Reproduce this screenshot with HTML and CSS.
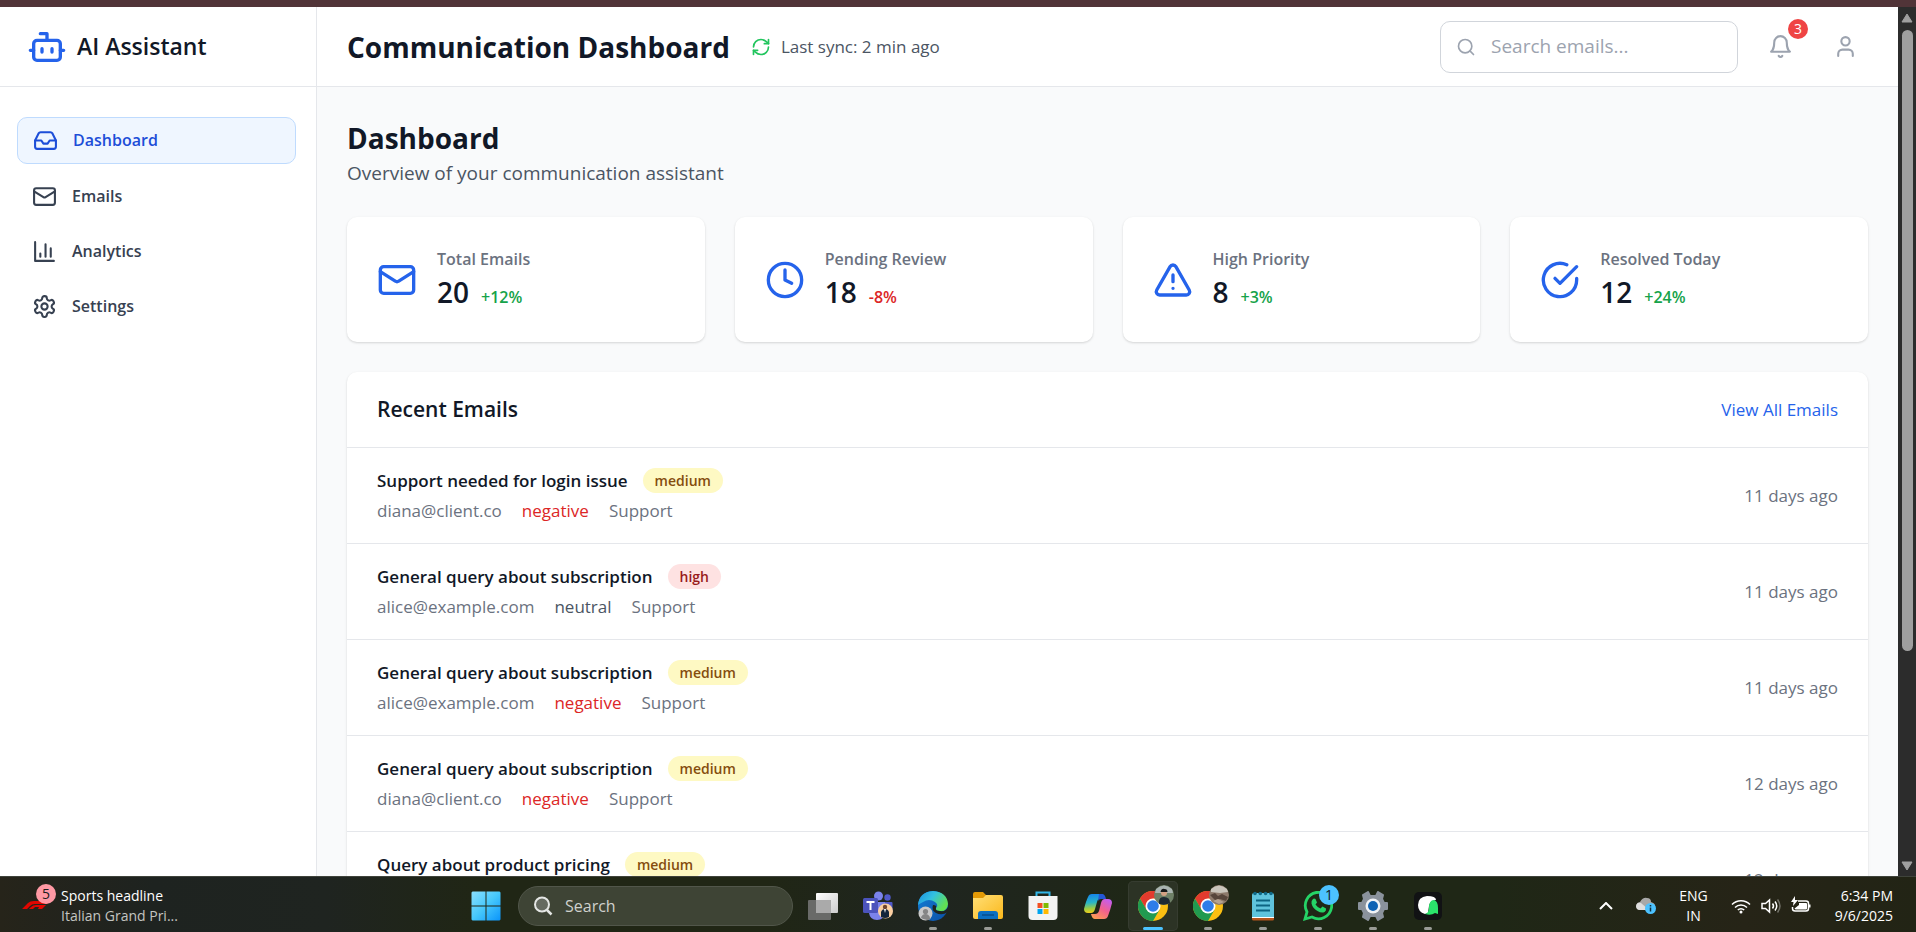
FILE: index.html
```html
<!DOCTYPE html>
<html lang="en">
<head>
<meta charset="utf-8">
<title>Communication Dashboard</title>
<link rel="stylesheet" href="styles.css">
</head>
<body>
<div class="window-edge"></div>

<div class="viewport">
  <div class="app">
    <aside class="sidebar">
      <div class="brand">
        <svg class="icon icon-lg" viewBox="0 0 24 24"><path d="M12 8V4H8"/><rect width="16" height="12" x="4" y="8" rx="2"/><path d="M2 14h2M20 14h2M15 13v2M9 13v2"/></svg>
        <span class="brand-name">AI Assistant</span>
      </div>
      <nav class="nav">
        <a class="nav-item active" href="#dashboard">
          <svg class="icon icon-md" viewBox="0 0 24 24"><path d="M22 12h-6l-2 3h-4l-2-3H2"/><path d="M5.45 5.11 2 12v6a2 2 0 0 0 2 2h16a2 2 0 0 0 2-2v-6l-3.45-6.89A2 2 0 0 0 16.76 4H7.24a2 2 0 0 0-1.79 1.11z"/></svg>
          Dashboard
        </a>
        <a class="nav-item" href="#emails">
          <svg class="icon icon-md" viewBox="0 0 24 24"><rect width="20" height="16" x="2" y="4" rx="2"/><path d="m22 7-8.97 5.7a1.94 1.94 0 0 1-2.06 0L2 7"/></svg>
          Emails
        </a>
        <a class="nav-item" href="#analytics">
          <svg class="icon icon-md" viewBox="0 0 24 24"><path d="M3 3v18h18M18 17V9M13 17V5M8 17v-3"/></svg>
          Analytics
        </a>
        <a class="nav-item" href="#settings">
          <svg class="icon icon-md" viewBox="0 0 24 24"><path d="M12.22 2h-.44a2 2 0 0 0-2 2v.18a2 2 0 0 1-1 1.73l-.43.25a2 2 0 0 1-2 0l-.15-.08a2 2 0 0 0-2.73.73l-.22.38a2 2 0 0 0 .73 2.73l.15.1a2 2 0 0 1 1 1.72v.51a2 2 0 0 1-1 1.74l-.15.09a2 2 0 0 0-.73 2.73l.22.38a2 2 0 0 0 2.73.73l.15-.08a2 2 0 0 1 2 0l.43.25a2 2 0 0 1 1 1.73V20a2 2 0 0 0 2 2h.44a2 2 0 0 0 2-2v-.18a2 2 0 0 1 1-1.73l.43-.25a2 2 0 0 1 2 0l.15.08a2 2 0 0 0 2.73-.73l.22-.39a2 2 0 0 0-.73-2.73l-.15-.08a2 2 0 0 1-1-1.74v-.5a2 2 0 0 1 1-1.74l.15-.09a2 2 0 0 0 .73-2.73l-.22-.38a2 2 0 0 0-2.73-.73l-.15.08a2 2 0 0 1-2 0l-.43-.25a2 2 0 0 1-1-1.73V4a2 2 0 0 0-2-2z"/><circle cx="12" cy="12" r="3"/></svg>
          Settings
        </a>
      </nav>
    </aside>

    <div class="page">
      <header class="topbar">
        <h1 class="title">Communication Dashboard</h1>
        <div class="sync">
          <svg class="icon icon-sm sync-icon" viewBox="0 0 24 24"><path d="M3 12a9 9 0 0 1 9-9 9.75 9.75 0 0 1 6.74 2.74L21 8"/><path d="M21 3v5h-5"/><path d="M21 12a9 9 0 0 1-9 9 9.75 9.75 0 0 1-6.74-2.74L3 16"/><path d="M8 16H3v5"/></svg>
          <span>Last sync: 2 min ago</span>
        </div>
        <div class="actions">
          <label class="search">
            <svg class="icon icon-sm" viewBox="0 0 24 24"><circle cx="11" cy="11" r="8"/><path d="m21 21-4.3-4.3"/></svg>
            <input type="search" class="search-input" placeholder="Search emails..." aria-label="Search emails">
          </label>
          <button class="icon-button" type="button" aria-label="Notifications">
            <svg class="icon icon-md" viewBox="0 0 24 24"><path d="M6 8a6 6 0 0 1 12 0c0 7 3 9 3 9H3s3-2 3-9"/><path d="M10.3 21a1.94 1.94 0 0 0 3.4 0"/></svg>
            <span class="count">3</span>
          </button>
          <button class="icon-button" type="button" aria-label="Account">
            <svg class="icon icon-md" viewBox="0 0 24 24"><path d="M19 21v-2a4 4 0 0 0-4-4H9a4 4 0 0 0-4 4v2"/><circle cx="12" cy="7" r="4"/></svg>
          </button>
        </div>
      </header>

      <main class="content">
        <h2 class="title">Dashboard</h2>
        <p class="subtitle">Overview of your communication assistant</p>

        <section class="stats">
          <article class="stat">
            <svg class="icon icon-lg" viewBox="0 0 24 24"><rect width="20" height="16" x="2" y="4" rx="2"/><path d="m22 7-8.97 5.7a1.94 1.94 0 0 1-2.06 0L2 7"/></svg>
            <div>
              <p class="stat-label">Total Emails</p>
              <p class="stat-value">20 <span class="delta up">+12%</span></p>
            </div>
          </article>
          <article class="stat">
            <svg class="icon icon-lg" viewBox="0 0 24 24"><circle cx="12" cy="12" r="10"/><path d="M12 6v6l4 2"/></svg>
            <div>
              <p class="stat-label">Pending Review</p>
              <p class="stat-value">18 <span class="delta down">-8%</span></p>
            </div>
          </article>
          <article class="stat">
            <svg class="icon icon-lg" viewBox="0 0 24 24"><path d="m21.73 18-8-14a2 2 0 0 0-3.48 0l-8 14A2 2 0 0 0 4 21h16a2 2 0 0 0 1.73-3Z"/><path d="M12 9v4M12 17h.01"/></svg>
            <div>
              <p class="stat-label">High Priority</p>
              <p class="stat-value">8 <span class="delta up">+3%</span></p>
            </div>
          </article>
          <article class="stat">
            <svg class="icon icon-lg" viewBox="0 0 24 24"><path d="M22 11.08V12a10 10 0 1 1-5.93-9.14"/><path d="m9 11 3 3L22 4"/></svg>
            <div>
              <p class="stat-label">Resolved Today</p>
              <p class="stat-value">12 <span class="delta up">+24%</span></p>
            </div>
          </article>
        </section>

        <section class="panel">
          <div class="panel-head">
            <h3 class="panel-title">Recent Emails</h3>
            <a class="panel-link" href="#emails">View All Emails</a>
          </div>
          <ul class="emails">
            <li class="email">
              <div>
                <div class="email-top"><span class="subject">Support needed for login issue</span><span class="tag medium">medium</span></div>
                <div class="email-meta"><span>diana@client.co</span><span class="negative">negative</span><span>Support</span></div>
              </div>
              <time class="when">11 days ago</time>
            </li>
            <li class="email">
              <div>
                <div class="email-top"><span class="subject">General query about subscription</span><span class="tag high">high</span></div>
                <div class="email-meta"><span>alice@example.com</span><span class="neutral">neutral</span><span>Support</span></div>
              </div>
              <time class="when">11 days ago</time>
            </li>
            <li class="email">
              <div>
                <div class="email-top"><span class="subject">General query about subscription</span><span class="tag medium">medium</span></div>
                <div class="email-meta"><span>alice@example.com</span><span class="negative">negative</span><span>Support</span></div>
              </div>
              <time class="when">11 days ago</time>
            </li>
            <li class="email">
              <div>
                <div class="email-top"><span class="subject">General query about subscription</span><span class="tag medium">medium</span></div>
                <div class="email-meta"><span>diana@client.co</span><span class="negative">negative</span><span>Support</span></div>
              </div>
              <time class="when">12 days ago</time>
            </li>
            <li class="email">
              <div>
                <div class="email-top"><span class="subject">Query about product pricing</span><span class="tag medium">medium</span></div>
                <div class="email-meta"></div>
              </div>
              <time class="when">12 days ago</time>
            </li>
          </ul>
        </section>
      </main>
    </div>
  </div>

  <div class="scrollbar">
    <svg class="scroll-arrow" viewBox="0 0 12 10"><path d="M6 1 11 9H1z"/></svg>
    <div class="scroll-track"><div class="scroll-thumb"></div></div>
    <svg class="scroll-arrow" viewBox="0 0 12 10"><path d="M6 9 11 1H1z"/></svg>
  </div>
</div>

<footer class="taskbar">
  <button class="widget" type="button">
    <span class="widget-art">
      <svg class="f1" viewBox="0 0 28 8"><path d="M0 8 6 2Q8 0 12 0H28L25 3H13Q10 3 8 5L5 8z"/><path d="M7 8 9 6Q11 4 14 4H24L20 8H16L17 6H13L11 8z"/></svg>
      <span class="widget-count">5</span>
    </span>
    <span class="widget-text"><span>Sports headline</span><span class="dim">Italian Grand Pri...</span></span>
  </button>

  <div class="dock">
    <button class="task" type="button" aria-label="Start">
      <svg class="task-icon" viewBox="0 0 30 30">
        <defs><linearGradient id="win" x1="0" y1="0" x2="1" y2="1"><stop offset="0" stop-color="#8be0ff"/><stop offset=".5" stop-color="#46c8fc"/><stop offset="1" stop-color="#0a94fb"/></linearGradient></defs>
        <path fill="url(#win)" d="M1.500.5h13v14h-14v-13zM15.500.5h13l1 1v13h-14zM.5 15.500h14v14h-13l-1-1zM15.500 15.500h14v13l-1 1h-13z"/>
      </svg>
    </button>
    <label class="task-search">
      <svg class="task-search-icon" viewBox="0 0 20 20"><circle cx="9" cy="8.500" r="7" fill="#656a60" stroke="#e4e6e4" stroke-width="2"/><path d="m14 14 4.500 4.500" stroke="#e4e6e4" stroke-width="2.500"/></svg>
      <input class="task-search-input" type="text" placeholder="Search" aria-label="Search Windows">
    </label>
    <button class="task" type="button" aria-label="Task view">
      <svg class="task-icon" viewBox="0 0 30 30"><defs><linearGradient id="tv" x1="0" y1="0" x2="1" y2="1"><stop offset="0" stop-color="#fff"/><stop offset="1" stop-color="#ccc"/></linearGradient></defs><rect x="8" y="2" width="22" height="20" rx="1" fill="url(#tv)"/><rect x="0" y="9" width="23" height="20" rx="1" fill="#777" opacity=".85"/><path fill="#aaa" d="M8 9h15v13H8z"/></svg>
    </button>
    <button class="task" type="button" aria-label="Teams">
      <svg class="task-icon" viewBox="0 0 30 30"><circle cx="15.500" cy="5" r="4.500" fill="#7b83eb"/><circle cx="24.500" cy="6.500" r="3.200" fill="#5059c9"/><path fill="#5059c9" d="M19 11h9.500q1 0 1 1v9q-1 6-8 6z"/><path fill="#7b83eb" d="M8 11h14v11q-1 7-8 7t-8-7z"/><rect y="7" width="15" height="15" rx="1.500" fill="#4b53bc"/><path d="M3.500 11h8M7.500 11v8" stroke="#fff" stroke-width="2"/><circle cx="22.500" cy="20" r="7.500" fill="#fbcfa0"/><circle cx="22" cy="16" r="2.200" fill="#70442e"/><path fill="#14243a" d="M18 26v-5q1-3 4-3t4 3v5q-4 2-8 0z"/><path fill="#fff" d="m21 18 1 4 1-4z"/></svg>
    </button>
    <button class="task running" type="button" aria-label="Edge">
      <svg class="task-icon" viewBox="0 0 30 30"><defs><linearGradient id="eg" x1="0" y1="0" x2="1" y2=".5"><stop offset="0" stop-color="#1b8ee0"/><stop offset=".5" stop-color="#33c0e0"/><stop offset="1" stop-color="#62e052"/></linearGradient><linearGradient id="eb" x1="0" y1="0" x2="1" y2="1"><stop offset="0" stop-color="#1380d8"/><stop offset="1" stop-color="#0b4fa5"/></linearGradient></defs><circle cx="15" cy="15" r="15" fill="url(#eb)"/><path fill="url(#eg)" d="M0 14Q1 1 15 0q14 1 15 13-1 8-8 7-5 0-4-3 3-3-1-6-6-4-12 0-4 2-5 3z"/><path fill="#1f2520" d="M15 14q-2 5 3 8 6 3 12-1v-5q-2 5-8 4-5 0-4-3 1-3-3-3z"/><circle cx="7.500" cy="22.500" r="7" fill="#c9c9c9"/><circle cx="7.500" cy="20.500" r="2.600" fill="#858585"/><path fill="#858585" d="M3 27q1-4 4.500-4t4.500 4-9 0z"/></svg>
    </button>
    <button class="task running" type="button" aria-label="File Explorer">
      <svg class="task-icon" viewBox="0 0 30 30"><path fill="#e39a06" d="M0 3q0-2 2-2h8l3 3h7v6H0z"/><defs><linearGradient id="fe" x1="0" y1="0" x2="1" y2="1"><stop offset="0" stop-color="#ffdf77"/><stop offset="1" stop-color="#fbb81b"/></linearGradient></defs><path fill="url(#fe)" d="M0 7h10l3-3h15q2 0 2 2v20q0 2-2 2H2q-2 0-2-2z"/><path fill="#0b6fc2" d="M5 28v-5q0-3 3-3h14q3 0 3 3v5z"/><path stroke="#084e8d" stroke-width="1.500" d="M9 24h12"/></svg>
    </button>
    <button class="task" type="button" aria-label="Microsoft Store">
      <svg class="task-icon" viewBox="0 0 30 30"><path d="M8.500 6V1.500h13V6" fill="none" stroke="#32b6e8" stroke-width="2"/><path fill="#f3f3f3" d="M.5 5h29v20q0 4-4 4h-21q-4 0-4-4z"/><path fill="#f25022" d="M9.500 12h5v5h-5z"/><path fill="#7fba00" d="M15.500 12h5v5h-5z"/><path fill="#00a4ef" d="M9.500 18h5v5h-5z"/><path fill="#ffb900" d="M15.500 18h5v5h-5z"/></svg>
    </button>
    <button class="task" type="button" aria-label="Copilot">
      <svg class="task-icon" viewBox="0 0 30 30"><defs><linearGradient id="ca" x1=".3" y1="0" x2=".4" y2="1"><stop offset="0" stop-color="#1583ee"/><stop offset=".45" stop-color="#29b6c6"/><stop offset=".75" stop-color="#9ccd45"/><stop offset="1" stop-color="#f5cc17"/></linearGradient><linearGradient id="cb" x1=".8" y1="0" x2=".2" y2="1"><stop offset="0" stop-color="#c35df0"/><stop offset=".5" stop-color="#f2618c"/><stop offset="1" stop-color="#ff9d52"/></linearGradient></defs><path fill="url(#ca)" d="M9 3h9q3 0 4 4h-4q-3 0-4 4l-2 7q-1 4-4 4H5q-4 0-4-4Q3 10 5 6q1-3 4-3z"/><path fill="#2456d6" d="M16 3h3q3 0 4 5h-5q-2 0-3 2z"/><path fill="url(#cb)" d="M25 8q4 0 4 4-2 8-4 13-1 3-4 3h-9q-3 0-4-5h4q3 0 4-3l2-8q1-4 4-4z"/></svg>
    </button>
    <button class="task running current" type="button" aria-label="Chrome">
      <svg class="task-icon" viewBox="0 0 30 30"><circle cx="15" cy="15" r="15" fill="#fbbf12"/><path fill="#e33b2e" d="M2 7.500A15 15 0 0 1 28 7.500H15L8.500 19z"/><path fill="#219a50" d="M2 7.500A15 15 0 0 0 15 30l6.500-11.200H8.500z"/><circle cx="15" cy="15" r="7.500" fill="#fff"/><circle cx="15" cy="15" r="5.800" fill="#2f7de9"/></svg>
      <svg class="avatar" viewBox="0 0 20 20"><circle cx="10" cy="10" r="10" fill="#6f8168"/><path fill="#a9b3b0" d="M2 4q8-7 16 0l1 4H1z"/><path fill="#1e2a33" d="M5 19q-1-7 5-7t6 6q-5 3-11 1z"/><circle cx="10" cy="8" r="3" fill="#d3a184"/><path fill="#16191a" d="M6.500 7q1-4 4-3 3 0 3 3z"/></svg>
    </button>
    <button class="task running" type="button" aria-label="Chrome, second profile">
      <svg class="task-icon" viewBox="0 0 30 30"><circle cx="15" cy="15" r="15" fill="#fbbf12"/><path fill="#e33b2e" d="M2 7.500A15 15 0 0 1 28 7.500H15L8.500 19z"/><path fill="#219a50" d="M2 7.500A15 15 0 0 0 15 30l6.500-11.200H8.500z"/><circle cx="15" cy="15" r="7.500" fill="#fff"/><circle cx="15" cy="15" r="5.800" fill="#2f7de9"/></svg>
      <svg class="avatar" viewBox="0 0 20 20"><circle cx="10" cy="10" r="10" fill="#8d7a6b"/><path fill="#c9c5bb" d="M2 4q8-7 16 0l1 3-8 1-9-1z"/><path fill="#57463b" d="m1 10 5-2 3 3 4-2 6 3-2 4-6-2-5 1z"/><path fill="#b5a392" d="m4 16 5-2 6 3-5 2z"/></svg>
    </button>
    <button class="task running" type="button" aria-label="Notepad">
      <svg class="task-icon" viewBox="0 0 30 30"><path fill="#fff" d="M4 24h22v3H4z"/><path fill="#b4541c" d="M4 27h22v1q0 1.500-1.500 1.500h-19Q4 29.500 4 28z"/><path fill="#5fc3dc" d="M4 4q0-2 2-2h18q2 0 2 2v22H4z"/><path stroke="#0d6482" stroke-width="2" d="M8 9.500h14M8 14.500h14M8 19.500h14"/><g fill="#116a88"><circle cx="7" cy="2.500" r="1.800"/><circle cx="12.300" cy="2.500" r="1.800"/><circle cx="17.600" cy="2.500" r="1.800"/><circle cx="23" cy="2.500" r="1.800"/></g></svg>
    </button>
    <button class="task running" type="button" aria-label="WhatsApp">
      <svg class="task-icon" viewBox="0 0 30 30"><path fill="#1f2716" stroke="#25d366" stroke-width="2.800" d="m2 28 2-7A13.200 13.200 0 1 1 9 26z"/><path fill="#25d366" d="M10 8q1-1 2.500 0l1.500 3.500-1.500 2q2 3 5 4l2-2 3.500 2q.5 2-1.500 3.500-3 1.500-7-1-5-3-6-7.500-.5-3 1.500-4.500z"/></svg>
      <span class="task-count">1</span>
    </button>
    <button class="task running" type="button" aria-label="Settings">
      <svg class="task-icon" viewBox="0 0 30 30"><path fill="#8a929c" stroke="#8a929c" stroke-width="2" stroke-linejoin="round" d="m10 1 2 4h6l2-4 5 3-1 4 2 4h3v6h-3l-2 4 1 4-5 3-2-4h-6l-2 4-5-3 1-4-2-4H1v-6h3l2-4-1-4z"/><circle cx="15" cy="15" r="7.500" fill="#f0f3f6"/><circle cx="15" cy="15" r="5" fill="#0f63b4"/></svg>
    </button>
    <button class="task running" type="button" aria-label="Chat">
      <svg class="task-icon" viewBox="0 0 30 30"><rect x="1" y="1" width="28" height="28" rx="5" fill="#111214"/><path fill="#fff" d="M14 5q9 0 9 4-6 0-7 6l-1 7-3 1Q5 21 5 14q0-8 9-9z"/><path fill="#2be36b" d="M12 23q4-1 4-6 0-8 5-8 4 1 4 8v6l-3-1q-4 3-10 1z"/></svg>
    </button>
  </div>

  <div class="tray">
    <svg class="tray-chevron" viewBox="0 0 14 8"><path d="m1 7 6-6 6 6"/></svg>
    <svg class="tray-cloud" viewBox="0 0 20 18"><path fill="#a8a8a8" d="M5 13a4 4 0 0 1-1-8Q7 0 11 1q4 0 4 4 4 1 4 4v4z"/><path fill="#dedede" d="M4 13q-4 0-4-4 1-4 5-3l8 7z"/><circle cx="14.500" cy="11.500" r="5.500" fill="#4cc2ff"/><path stroke="#103040" stroke-width="1.500" d="M14.500 8v1.500M14.500 10.500v4"/></svg>
    <span class="lang"><span>ENG</span><span>IN</span></span>
    <span class="status">
      <svg class="tray-icon" viewBox="0 0 20 20"><path d="M1 8.500a12.500 12.500 0 0 1 18 0M4 11.500a8.500 8.500 0 0 1 12 0M6.800 14a4.500 4.500 0 0 1 6.400 0"/><circle cx="10" cy="16" r="1.500" class="solid"/></svg>
      <svg class="tray-icon" viewBox="0 0 20 20"><path d="M1 7.500v5h3.500L8.500 16V4L4.500 7.500z"/><path d="M11.500 7.500q2 2.500 0 5M14 5.500q3.500 4.500 0 9"/><path d="M16.500 3.500q5 6.500 0 13" opacity=".35"/></svg>
      <svg class="tray-icon" viewBox="0 0 20 20"><path d="M7 5h8q2.500 0 2.500 2.500v5q0 2.500-2.500 2.500H4q-2.500 0-2.500-2.500V11"/><path class="solid" d="M8 7h7q1 0 1 1v4.500q0 1-1 1H5q-1 0-1.500-1L8 9zM18 8.500h1.500v3H18zM4 0 0 6h2.500l-.5 4 5-6H4z"/></svg>
    </span>
    <span class="clock"><span>6:34 PM</span><span>9/6/2025</span></span>
  </div>
</footer>
</body>
</html>
```

FILE: styles.css
```css
* { box-sizing: border-box; }

body {
  display: flex;
  flex-direction: column;
  height: 100vh;
  margin: 0;
  overflow: hidden;
  background: #fff;
  color: #111827;
  font-family: "Open Sans", "Noto Sans", sans-serif;
  font-size: 17px;
  line-height: 25px;
}

h1, h2, h3, p, ul { margin: 0; padding: 0; }
ul { list-style: none; }
a { text-decoration: none; }
button { padding: 0; border: 0; background: none; color: inherit; font: inherit; }
input { min-width: 0; padding: 0; border: 0; outline: 0; background: none; color: inherit; font: inherit; }
svg { display: block; flex: none; }

.window-edge { flex: none; height: 7px; background: #513438; }
.viewport { display: flex; flex: 1; min-height: 0; }
.app { display: flex; flex: 1; min-width: 0; overflow: hidden; background: #f9fafb; }

.icon { fill: none; stroke: currentColor; stroke-width: 2; stroke-linecap: round; stroke-linejoin: round; }
.icon-sm { width: 20px; height: 20px; }
.icon-md { width: 25px; height: 25px; }
.icon-lg { width: 40px; height: 40px; color: #2563eb; }

/* Sidebar */
.sidebar { flex: none; width: 317px; border-right: 1px solid #e5e7eb; background: #fff; }
.brand { display: flex; align-items: center; gap: 10px; height: 80px; padding-left: 27px; border-bottom: 1px solid #e5e7eb; }
.brand-name { font-size: 23px; font-weight: 600; }
.nav { display: flex; flex-direction: column; gap: 10px; padding: 30px 20px 0 17px; }
.nav-item { display: flex; align-items: center; gap: 15px; padding: 10px 15px; border-radius: 10px; color: #374151; font-size: 16px; font-weight: 600; }
.nav-item.active { border: 1px solid #bfdbfe; background: #eff6ff; color: #1d4ed8; }

/* Header */
.page { flex: 1; min-width: 0; }
.topbar { display: flex; align-items: center; height: 80px; padding: 0 30px; border-bottom: 1px solid #e5e7eb; background: #fff; }
.title { font-size: 28px; font-weight: 700; line-height: 42px; }
.sync { display: flex; align-items: center; gap: 10px; margin-left: 21px; color: #4b5563; }
.sync-icon { color: #22c55e; }
.actions { display: flex; align-items: center; gap: 20px; margin-left: auto; color: #9ca3af; }
.search { display: flex; align-items: center; gap: 15px; width: 298px; height: 52px; padding: 0 15px; border: 1px solid #d1d5db; border-radius: 10px; }
.search-input { flex: 1; font-size: 19px; }
.search-input::placeholder { color: #9ca3af; opacity: 1; }
.icon-button { position: relative; padding: 10px; }
.count { position: absolute; top: -5px; right: -5px; width: 20px; height: 20px; border-radius: 50%; background: #ef4444; color: #fff; font-size: 14px; line-height: 20px; text-align: center; }

/* Dashboard */
.content { padding: 30px; }
.subtitle { color: #4b5563; font-size: 19px; line-height: 28px; }
.stats { display: grid; grid-template-columns: repeat(4, 1fr); gap: 30px; margin: 30px 0; }
.stat, .panel { border-radius: 10px; background: #fff; box-shadow: 0 1px 3px rgba(0, 0, 0, .1), 0 1px 2px rgba(0, 0, 0, .06); }
.stat { display: flex; align-items: center; gap: 20px; padding: 30px; }
.stat-label { color: #6b7280; font-size: 16px; font-weight: 600; }
.stat-value { display: flex; align-items: baseline; gap: 12px; font-size: 28px; font-weight: 600; line-height: 40px; }
.delta { font-size: 16px; line-height: 20px; }
.up { color: #16a34a; }
.down { color: #dc2626; }

.panel-head { display: flex; align-items: center; justify-content: space-between; height: 76px; padding: 0 30px; border-bottom: 1px solid #e5e7eb; }
.panel-title { font-size: 21px; font-weight: 600; }
.panel-link { color: #2563eb; }
.email { display: flex; align-items: center; justify-content: space-between; padding: 20px 30px; border-bottom: 1px solid #e5e7eb; }
.email-top { display: flex; align-items: center; gap: 15px; }
.subject { font-weight: 600; }
.tag { padding: 0 12px; border-radius: 13px; font-size: 14px; font-weight: 600; }
.medium { background: #fef9c3; color: #854d0e; }
.high { background: #fee2e2; color: #991b1b; }
.email-meta { display: flex; gap: 20px; min-height: 25px; margin-top: 5px; color: #6b7280; }
.negative { color: #dc2626; }
.neutral { color: #4b5563; }
.when { color: #6b7280; }

/* Scrollbar */
.scrollbar { display: flex; flex-direction: column; align-items: center; flex: none; width: 18px; padding: 6px 0 5px; background: #2c2c2c; }
.scroll-arrow { width: 12px; height: 10px; fill: #9f9f9f; stroke: #9f9f9f; stroke-linejoin: round; }
.scroll-track { flex: 1; padding: 7px 0 3px; }
.scroll-thumb { width: 11px; height: 75%; border-radius: 6px; background: #9f9f9f; }

/* Taskbar */
.taskbar {
  display: grid;
  grid-template-columns: 1fr auto 1fr;
  flex: none;
  height: 56px;
  padding-top: 3px;
  border-top: 1px solid #3f433b;
  background: linear-gradient(90deg, #26241a, #1e2320 8%, #1f2420 17%, #202615 25%, #202615 40%, #1f2520 48%, #1f2716 60%, #1f2716 78%, #262417 91%, #222415);
  color: #fff;
  font-size: 14px;
  line-height: 20px;
}
.widget { display: flex; align-items: center; justify-self: start; padding-left: 22px; text-align: left; }
.widget-art { position: relative; width: 34px; height: 44px; margin-right: 5px; }
.f1 { position: absolute; left: 0; top: 17px; width: 28px; height: 8px; fill: #e10600; }
.widget-count { position: absolute; top: 0; right: 0; width: 20px; height: 20px; border-radius: 50%; background: #ff99a4; color: #1c1c1c; line-height: 20px; text-align: center; }
.widget-text, .lang, .clock { display: flex; flex-direction: column; }
.dim { color: #c4c5c2; }

.dock { display: flex; align-items: center; gap: 5px; padding-right: 2px; }
.task { position: relative; display: grid; place-items: center; width: 50px; height: 50px; border-radius: 5px; }
.task-icon { width: 30px; height: 30px; }
.task.current { background: #2c3325; box-shadow: inset 0 0 0 1px #363c30; }
.task.running::after { content: ""; position: absolute; bottom: 1px; left: 50%; width: 8px; height: 3px; margin-left: -4px; border-radius: 2px; background: #999b96; }
.task.current::after { width: 20px; margin-left: -10px; background: #4cc2ff; }
.avatar, .task-count { position: absolute; top: 4px; right: 4px; width: 20px; height: 20px; }
.task-count { border-radius: 50%; background: #4cc2ff; color: #101820; text-align: center; }
.task-search { display: flex; align-items: center; gap: 12px; width: 275px; height: 40px; margin-left: 2px; padding: 0 14px; border: 1px solid #51564a; border-radius: 20px; background: #3e4435; }
.task-search-icon { width: 20px; height: 20px; }
.task-search-input { flex: 1; font-size: 16px; }
.task-search-input::placeholder { color: #cfd1cd; opacity: 1; }

.tray { display: flex; align-items: center; justify-self: end; padding-right: 23px; }
.tray-chevron { width: 14px; height: 8px; fill: none; stroke: #fff; stroke-width: 2; }
.tray-cloud { width: 20px; height: 18px; margin: 0 23px; }
.lang { align-items: center; }
.status { display: flex; gap: 10px; margin: 0 24px 0 23px; }
.tray-icon { width: 20px; height: 20px; fill: none; stroke: #fff; stroke-width: 1.5; }
.tray-icon .solid { fill: #fff; stroke: none; }
.clock { align-items: flex-end; }
```
